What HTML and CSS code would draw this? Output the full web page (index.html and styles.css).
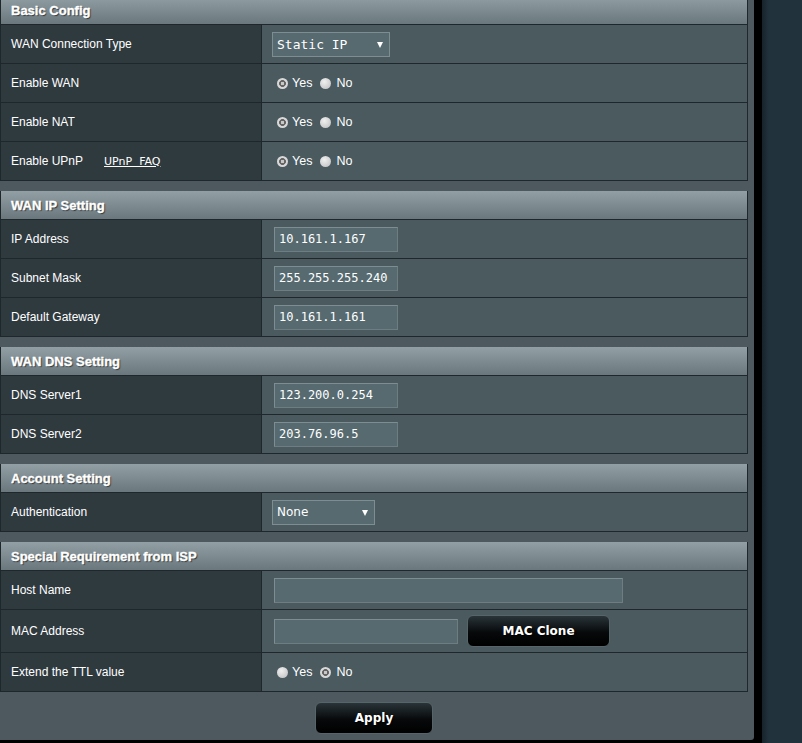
FILE: index.html
```html
<!DOCTYPE html>
<html>
<head>
<meta charset="utf-8">
<link rel="stylesheet" href="styles.css">
</head>
<body>
<div class="page">
  <div class="frame">
    <div class="panel">
      <div class="section first">
        <div class="head">Basic Config</div>
        <div class="row">
          <div class="lbl">WAN Connection Type</div>
          <div class="val pad-sel"><span class="sel"><select class="mono"><option>Static IP</option></select></span></div>
        </div>
        <div class="row">
          <div class="lbl">Enable WAN</div>
          <div class="val pad-rad"><input type="radio" class="rad" name="wan" checked><span class="opt">Yes</span><input type="radio" class="rad" name="wan"><span class="opt">No</span></div>
        </div>
        <div class="row">
          <div class="lbl">Enable NAT</div>
          <div class="val pad-rad"><input type="radio" class="rad" name="nat" checked><span class="opt">Yes</span><input type="radio" class="rad" name="nat"><span class="opt">No</span></div>
        </div>
        <div class="row">
          <div class="lbl">Enable UPnP<a class="faq" href="#">UPnP  FAQ</a></div>
          <div class="val pad-rad"><input type="radio" class="rad" name="upnp" checked><span class="opt">Yes</span><input type="radio" class="rad" name="upnp"><span class="opt">No</span></div>
        </div>
      </div>

      <div class="section">
        <div class="head">WAN IP Setting</div>
        <div class="row">
          <div class="lbl">IP Address</div>
          <div class="val pad-in"><input class="txt" type="text" value="10.161.1.167"></div>
        </div>
        <div class="row">
          <div class="lbl">Subnet Mask</div>
          <div class="val pad-in"><input class="txt" type="text" value="255.255.255.240"></div>
        </div>
        <div class="row">
          <div class="lbl">Default Gateway</div>
          <div class="val pad-in"><input class="txt" type="text" value="10.161.1.161"></div>
        </div>
      </div>

      <div class="section">
        <div class="head">WAN DNS Setting</div>
        <div class="row">
          <div class="lbl">DNS Server1</div>
          <div class="val pad-in"><input class="txt" type="text" value="123.200.0.254"></div>
        </div>
        <div class="row">
          <div class="lbl">DNS Server2</div>
          <div class="val pad-in"><input class="txt" type="text" value="203.76.96.5"></div>
        </div>
      </div>

      <div class="section">
        <div class="head">Account Setting</div>
        <div class="row">
          <div class="lbl">Authentication</div>
          <div class="val pad-sel"><span class="sel sel-auth"><select class="sans"><option>None</option></select></span></div>
        </div>
      </div>

      <div class="section">
        <div class="head">Special Requirement from ISP</div>
        <div class="row">
          <div class="lbl">Host Name</div>
          <div class="val pad-in"><input class="txt wide" type="text" value=""></div>
        </div>
        <div class="row tall">
          <div class="lbl">MAC Address</div>
          <div class="val pad-in"><input class="txt mac" type="text" value=""><button class="btn clone">MAC Clone</button></div>
        </div>
        <div class="row">
          <div class="lbl">Extend the TTL value</div>
          <div class="val pad-rad"><input type="radio" class="rad" name="ttl"><span class="opt">Yes</span><input type="radio" class="rad" name="ttl" checked><span class="opt">No</span></div>
        </div>
      </div>

      <div class="actions"><button class="btn apply">Apply</button></div>
    </div>
  </div>
  <div class="side"></div>
</div>
</body>
</html>
```

FILE: styles.css
```css
* { box-sizing: border-box; }

body {
  margin: 0;
  background: #22323d;
  font-family: "Liberation Sans", Arial, sans-serif;
  font-size: 12px;
  color: #fff;
}

.page {
  display: flex;
  height: 743px;
  overflow: hidden;
}

.frame {
  flex: none;
  width: 762px;
  height: 743px;
  background: #000;
  padding-bottom: 3px;
}

.panel {
  width: 754px;
  height: 740px;
  background: #4d595e;
  border-bottom-right-radius: 3px;
  overflow: hidden;
}

.side {
  flex: 1;
  background: linear-gradient(to right, #17232b, #22323d 7px);
}

.section {
  width: 748px;
  border-left: 1px solid #1e272b;
  border-right: 1px solid #1e272b;
  border-bottom: 1px solid #1e272b;
  margin-bottom: 10px;
}

.section.first { margin-top: -4px; }

.head {
  height: 29px;
  border-bottom: 1px solid #1e272b;
  background: linear-gradient(#929fa5, #6a777d);
  padding: 1px 0 0 10px;
  font-weight: bold;
  font-size: 13px;
  line-height: 28px;
  -webkit-text-stroke: 0.35px #fff;
  text-shadow: 1px 1px 1px #2c3438;
}

.row {
  display: grid;
  grid-template-columns: 261px 1fr;
  height: 39px;
  border-bottom: 1px solid #1e272b;
}

.row:last-child {
  height: 38px;
  border-bottom: none;
}

.row.tall { height: 43px; }

.lbl {
  display: flex;
  align-items: center;
  padding-left: 10px;
  background: #2f3a3f;
  border-right: 1px solid #1e272b;
}

.faq {
  margin-left: 21px;
  color: #fff;
  font-family: "DejaVu Sans", sans-serif;
  font-size: 11px;
  white-space: pre;
  text-decoration: underline;
}

.val {
  display: flex;
  align-items: center;
  background: #4a5a5f;
}

.pad-sel { padding-left: 10px; }
.pad-in { padding-left: 12px; }
.pad-rad { padding-left: 15px; }

.sel {
  position: relative;
  display: inline-block;
}

.sel select {
  appearance: none;
  -webkit-appearance: none;
  width: 118px;
  height: 25px;
  margin: 0;
  padding: 0 0 0 4px;
  background: #566a70;
  border: 1px solid #7d8d92;
  border-radius: 0;
  color: #fff;
  outline: none;
}

.sel::after {
  content: "";
  position: absolute;
  right: 7px;
  top: 10px;
  border-left: 3px solid transparent;
  border-right: 3px solid transparent;
  border-top: 6px solid #fff;
}

.sel-auth select { width: 103px; }

.mono {
  font-family: "DejaVu Sans Mono", monospace;
  font-size: 13px;
}

.sans {
  font-family: "DejaVu Sans", sans-serif;
  font-size: 12px;
}

.txt {
  width: 124px;
  height: 25px;
  margin: 0;
  padding: 0 0 0 4px;
  background: #566a70;
  border: 1px solid #7d8d92;
  border-bottom-color: #6d7d82;
  border-right-color: #6d7d82;
  color: #fff;
  font-family: "DejaVu Sans Mono", monospace;
  font-size: 12px;
  outline: none;
}

.txt.wide { width: 349px; }
.txt.mac { width: 184px; }

.rad {
  appearance: none;
  -webkit-appearance: none;
  width: 11px;
  height: 11px;
  margin: 0 4px 0 0;
  border-radius: 50%;
  background: radial-gradient(circle at 40% 35%, #f0f0f0, #bcbcbc);
}

.rad:checked {
  background: radial-gradient(circle, #c8c8c8 0 1.4px, #656565 2px 3.1px, #d8d8d8 3.7px);
}

.opt {
  margin-right: 8px;
  font-size: 12.5px;
}

.rad + .opt + .rad { margin-right: 5px; }

.btn {
  height: 32px;
  border: 1px solid #56656a;
  border-radius: 6px;
  background: linear-gradient(#293439, #07090a 55%, #000);
  color: #fff;
  font-family: "DejaVu Sans", sans-serif;
  font-weight: bold;
  font-size: 12px;
  text-shadow: 1px 1px 1px #000;
}

.clone {
  width: 143px;
  margin-left: 9px;
}

.actions {
  width: 748px;
  display: flex;
  justify-content: center;
}

.apply { width: 118px; }
```
